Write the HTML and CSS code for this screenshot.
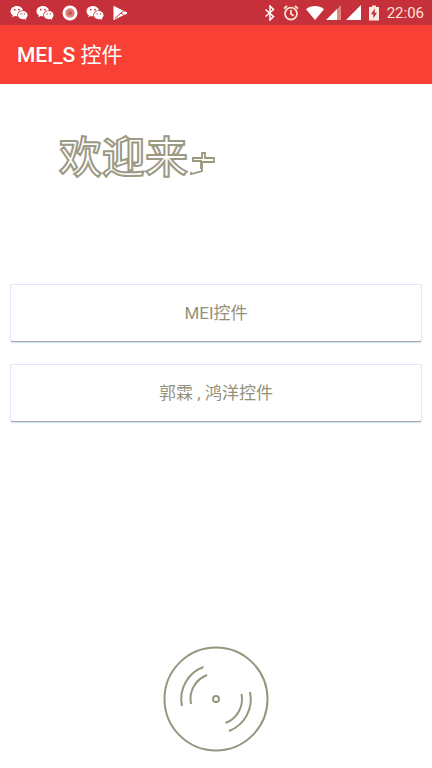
FILE: index.html
```html
<!DOCTYPE html>
<html lang="zh-CN">
<head>
<meta charset="utf-8">
<meta name="viewport" content="width=device-width, initial-scale=1">
<title>MEI_S 控件</title>
<link rel="stylesheet" href="styles.css">
</head>
<body>
<svg class="defs" width="0" height="0" aria-hidden="true">
  <symbol id="wechat" viewBox="0 0 18 16">
    <path fill="#fff" d="M7 1C3.300 1 .5 3.300.5 6.200c0 1.600.9 3 2.300 4l-.6 2 2.300-1.200c.8.2 1.600.3 2.500.3h.4C6.600 8 9.300 5.300 13 5.200 12.400 2.700 9.900 1 7 1z"/>
    <path fill="#fff" d="M17.600 10c0-2.300-2.200-4.100-4.900-4.100S7.900 7.700 7.900 10s2.200 4.200 4.900 4.200c.6 0 1.200-.1 1.700-.2l1.800 1-.5-1.700c1.100-.8 1.800-1.900 1.800-3.300z"/>
    <g fill="#c8303a"><circle cx="4.700" cy="4.700" r=".9"/><circle cx="9" cy="4.700" r=".9"/><circle cx="11.200" cy="8.900" r=".7"/><circle cx="14.400" cy="8.900" r=".7"/></g>
  </symbol>
</svg>
<header>
  <div class="status">
    <div class="notices">
      <svg width="18" height="16"><use href="#wechat"/></svg>
      <svg width="18" height="16"><use href="#wechat"/></svg>
      <svg width="16" height="16" viewBox="0 0 16 16"><circle cx="8" cy="8" r="7.500" fill="#fff"/><circle cx="8" cy="8" r="4.700" fill="#dc8177"/><circle cx="8" cy="8" r="2" fill="#c95751"/></svg>
      <svg width="18" height="16"><use href="#wechat"/></svg>
      <svg width="16" height="16" viewBox="0 0 16 16"><path fill="#fff" d="M1.500.8 11 5.500 14.500 8 11 10.500 1.500 15.200z"/><path d="M3 13.500 9 8l2.500-2M9 8l2.500 2" fill="none" stroke="#c8303a"/><circle cx="13.500" cy="8" r="1.500" fill="#fff"/></svg>
    </div>
    <div class="system">
      <svg width="12" height="16" viewBox="0 0 12 16"><path d="M1.500 4.500 9.500 11.500 6 15V1l3.500 3.500-8 7" fill="none" stroke="#fff" stroke-width="1.500"/></svg>
      <svg class="alarm" width="16" height="16" viewBox="0 0 16 16" fill="none" stroke="#fbe3d2" stroke-width="1.800"><circle cx="8" cy="8.700" r="6"/><path d="M8 5v4l2.700 1.700M1 3.700 4 1M15 3.700 12 1"/></svg>
      <svg class="wifi" width="18" height="16" viewBox="0 0 18 16"><path fill="#fff" d="M0 4.200C5-.2 13-.2 18 4.200L9 15z"/></svg>
      <svg class="signal" width="16" height="16" viewBox="0 0 16 16"><path fill="#fff" d="M0 15 11 4v11z"/><path fill="#e4877d" d="m11 4 4-4v15h-4z"/></svg>
      <svg class="full" width="16" height="16" viewBox="0 0 16 16"><path fill="#fff" d="M0 15 15 0v15z"/></svg>
      <svg width="10" height="16" viewBox="0 0 10 16"><path fill="#fbe9e2" d="M0 2h3V.5h4V2h3v13.500H0z"/><path fill="#c12c3c" d="M5.800 3.500 2 9.300h2.300v4L8 7.700H5.800z"/></svg>
      <time>22:06</time>
    </div>
  </div>
  <h1>MEI_S <span>控件</span></h1>
</header>
<main>
  <div class="welcome">
    <span>欢迎来</span>
    <svg width="28" height="26" viewBox="0 0 28 26" aria-hidden="true"><path d="M3 21v2l11-3v-9h12V7H17V2h-3v5H5v3h8v8" fill="none" stroke="#9a977d" stroke-width="1.800"/></svg>
  </div>
  <nav>
    <button type="button">MEI控件</button>
    <button type="button">郭霖 , 鸿洋控件</button>
  </nav>
  <svg class="disc" width="106" height="106" viewBox="-53 -53 106 106" fill="none" stroke="#98957f" stroke-width="2" aria-hidden="true">
    <circle r="51.500"/>
    <circle r="3"/>
    <path d="M-12.500-32A34 34 0 0 0-34 7M-9-24A25.600 25.600 0 0 0-25 5M34-7A34 34 0 0 1 13 32M25.500-5A25.600 25.600 0 0 1 9.500 24"/>
  </svg>
</main>
</body>
</html>
```
FILE: styles.css
```css
* {
  box-sizing: border-box;
}

body {
  display: flex;
  flex-direction: column;
  min-height: 100vh;
  margin: 0;
  background: #fff;
  font-family: Roboto, "Noto Sans CJK SC", sans-serif;
}

svg {
  display: block;
  flex: none;
}

.defs {
  position: absolute;
}

header {
  background: #f84035;
  color: #fff;
}

.status {
  display: flex;
  align-items: center;
  justify-content: space-between;
  height: 25px;
  padding: 0 8px 0 10px;
  background: #c5303b;
}

.notices {
  display: flex;
  gap: 8px;
}

.system {
  display: flex;
  align-items: center;
}

.alarm {
  margin-left: 7px;
}

.wifi {
  margin-left: 7px;
}

.signal {
  margin-left: 2px;
}

.full {
  margin: 0 7px 0 4px;
}

time {
  margin-left: 8px;
  color: #fbe3d8;
  font-size: 15px;
  line-height: 24px;
}

h1 {
  margin: 0;
  padding: 2px 17px 0;
  font-size: 21px;
  font-weight: 500;
  line-height: 57px;
}

h1 span {
  font-weight: 400;
}

main {
  display: flex;
  flex: 1;
  flex-direction: column;
  padding: 42px 10px 16px;
}

.welcome {
  display: flex;
  align-items: center;
  height: 64px;
  padding-left: 49px;
  color: transparent;
  font-size: 43px;
  font-weight: 500;
  line-height: 64px;
  -webkit-text-stroke: 2px #9c9984;
}

.welcome svg {
  margin-top: 12px;
}

nav {
  display: grid;
  gap: 22px;
  margin-top: 94px;
}

button {
  height: 58px;
  border: 1px solid #e9e0fb;
  border-bottom: 1px solid #aaa6b4;
  border-radius: 3px;
  background: #fff;
  box-shadow: 0 1px 1px #c8e8f4;
  color: #949179;
  font: 17px/24px Roboto, "Noto Sans CJK SC", sans-serif;
}

.disc {
  align-self: center;
  margin-top: auto;
}
```
